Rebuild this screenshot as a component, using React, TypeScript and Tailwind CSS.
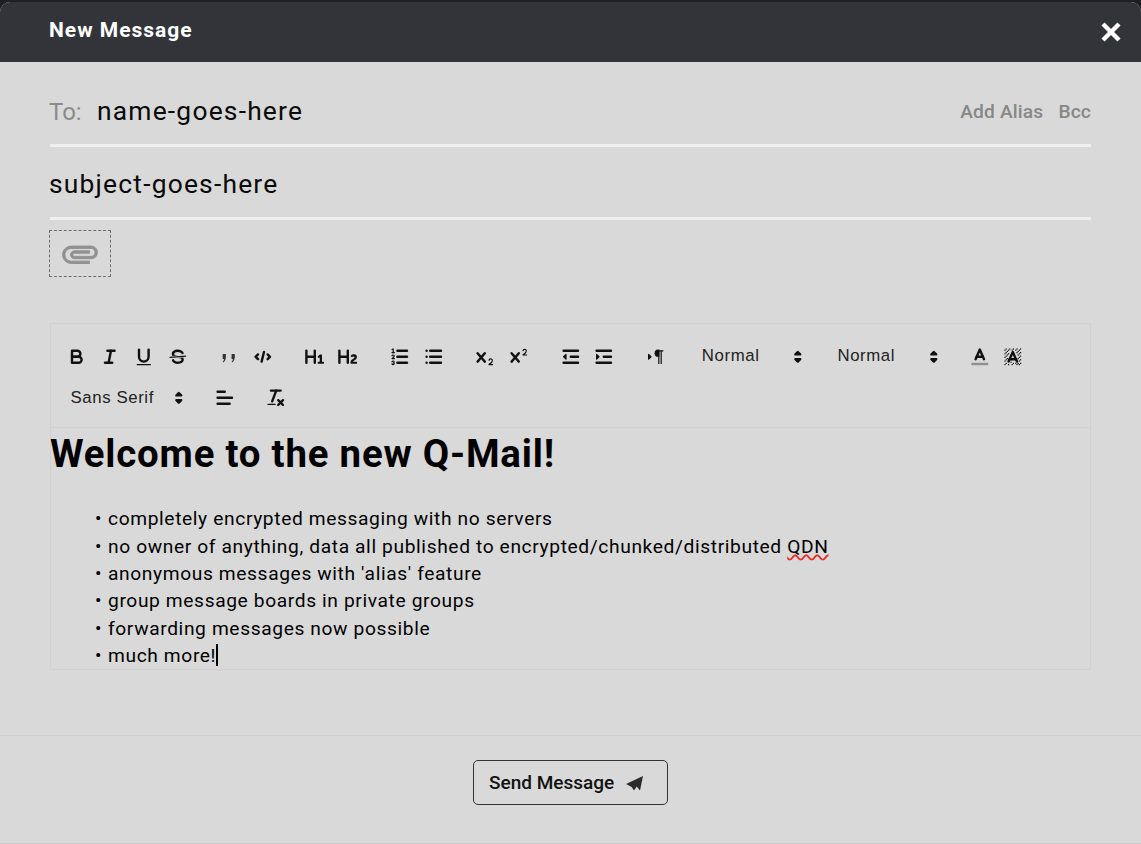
import type { ReactNode } from 'react';

const roboto = { fontFamily: 'Roboto, sans-serif' };

function Icon({ children }: { children: ReactNode }) {
    return (
        <button className="w-[33.7px] h-[29px] flex items-center justify-center shrink-0">
            <svg viewBox="0 0 18 18" className="w-[21.6px] h-[21.6px]" fill="none" stroke="#111" strokeWidth="2" strokeLinecap="round" strokeLinejoin="round">
                {children}
            </svg>
        </button>
    );
}

function Picker({ label, width, labelClass }: { label: string; width: string; labelClass: string }) {
    return (
        <div className={`${width} h-[29px] flex items-center justify-between pl-[11px] pr-[0px] mr-[18px] shrink-0`}>
            <span className={`${labelClass} text-[16.8px] tracking-[0.6px] text-[#222]`} style={{ fontFamily: '"Liberation Sans", sans-serif' }}>{label}</span>
            <svg viewBox="0 0 18 18" className="w-[21.6px] h-[21.6px]" fill="#111" stroke="#111" strokeWidth="2" strokeLinejoin="round">
                <polygon points="7 11 9 13 11 11 7 11" />
                <polygon points="7 7 9 5 11 7 7 7" />
            </svg>
        </div>
    );
}

const hatch: number[][] = [
    [4, 4], [5, 3], [6, 2], [3, 5], [2, 6], [5, 6], [4, 7], [3, 8], [2, 9], [3, 11], [2, 12], [4, 10], [3, 14], [2, 15],
    [9, 2], [12, 2], [15, 2], [8, 3], [11, 3], [14, 3], [2, 3], [3, 2], [13, 4], [12, 5], [15, 5], [14, 6], [13, 7], [15, 8],
    [14, 9], [13, 10], [15, 11], [14, 12], [15, 14], [13, 14], [11, 14], [9, 14], [12, 15], [7, 13], [5, 15], [8, 15], [14, 15],
];

const bullets = [
    'completely encrypted messaging with no servers',
    'no owner of anything, data all published to encrypted/chunked/distributed ',
    "anonymous messages with 'alias' feature",
    'group message boards in private groups',
    'forwarding messages now possible',
    'much more!',
];

export default function App() {
    return (
        <div className="h-[844px] bg-[#1e1f22] pt-[2px] overflow-hidden" style={roboto}>
            <div className="h-[842px] bg-[#d9d9d9] rounded-t-[10px] flex flex-col overflow-hidden">
                {/* Header */}
                <div className="h-[60px] bg-[#33343a] flex items-center justify-between pl-[49px] pr-[20px] shrink-0">
                    <h1 className="text-[21px] font-bold text-white tracking-[1px] -mt-[2px]">New Message</h1>
                    <svg viewBox="0 0 20 20" className="w-[20px] h-[20px]" stroke="#fff" strokeWidth="4.4">
                        <line x1="2" y1="2" x2="18" y2="18" />
                        <line x1="18" y1="2" x2="2" y2="18" />
                    </svg>
                </div>

                <div className="flex-1 pl-[50px] pr-[50px] flex flex-col">
                    {/* To */}
                    <div className="h-[85px] border-b-[3px] border-[#f0f0f0] flex items-center justify-between shrink-0">
                        <div className="flex items-center mt-[18px]">
                            <span className="text-[24px] text-[#8b8b8b] -ml-[1px] w-[48px]">To:</span>
                            <span className="text-[26.4px] text-[#0a0a0a] tracking-[1.2px]">name-goes-here</span>
                        </div>
                        <div className="flex items-center gap-[15px] text-[19.2px] tracking-[0.15px] font-medium text-[#878787] mt-[18px]">
                            <span>Add Alias</span>
                            <span>Bcc</span>
                        </div>
                    </div>

                    {/* Subject */}
                    <div className="h-[73px] pt-[6px] border-b-[3px] border-[#f0f0f0] flex items-center shrink-0">
                        <span className="text-[26.4px] text-[#0a0a0a] tracking-[1.2px] -ml-[1px]">subject-goes-here</span>
                    </div>

                    {/* Attachment */}
                    <div className="w-[62px] h-[47px] mt-[10px] -ml-[1px] border border-dashed border-[#6f6f6f] flex items-center justify-center shrink-0">
                        <svg viewBox="0 0 24 24" className="w-[38px] h-[38px] rotate-90" fill="#919191" stroke="#919191" strokeWidth="0.6">
                            <path d="M16.5 6v11.5c0 2.21-1.79 4-4 4s-4-1.79-4-4V5c0-1.38 1.12-2.5 2.5-2.5s2.5 1.12 2.5 2.5v10.5c0 .55-.45 1-1 1s-1-.45-1-1V6H10v9.5c0 1.38 1.12 2.5 2.5 2.5s2.5-1.12 2.5-2.5V5c0-2.21-1.79-4-4-4S7 2.79 7 5v12.5c0 3.04 2.46 5.5 5.5 5.5s5.5-2.46 5.5-5.5V6h-1.5z" />
                        </svg>
                    </div>

                    {/* Toolbar */}
                    <div className="h-[105px] mt-[46px] border border-[#d0d0d0] pl-[8.5px] pt-[12px] flex flex-col shrink-0">
                        <div className="h-[41px] flex items-center">
                            <div className="flex mr-[18px]">
                                <Icon>
                                    <path d="M5,4H9.5A2.5,2.5,0,0,1,12,6.5v0A2.5,2.5,0,0,1,9.5,9H5V4Z" />
                                    <path d="M5,9h5.5A2.5,2.5,0,0,1,13,11.5v0A2.5,2.5,0,0,1,10.5,14H5V9Z" />
                                </Icon>
                                <Icon>
                                    <line x1="7" x2="13" y1="4" y2="4" />
                                    <line x1="5" x2="11" y1="14" y2="14" />
                                    <line x1="8" x2="10" y1="14" y2="4" />
                                </Icon>
                                <Icon>
                                    <path d="M5,3V9a4,4,0,0,0,4,4H9a4,4,0,0,0,4-4V3" />
                                    <rect height="1" rx=".5" width="12" x="3" y="15" fill="#111" strokeWidth="0" />
                                </Icon>
                                <Icon>
                                    <line x1="15.5" x2="2.5" y1="8.5" y2="9.5" strokeWidth="1" />
                                    <path fill="#111" stroke="none" d="M9.007,8C6.542,7.791,6,7.519,6,6.5,6,5.792,7.283,5,9,5c1.571,0,2.765.679,2.969,1.309a1,1,0,0,0,1.9-.617C13.356,4.106,11.354,3,9,3,6.2,3,4,4.538,4,6.5a3.2,3.2,0,0,0,.5,1.843Z" />
                                    <path fill="#111" stroke="none" d="M8.984,10C11.457,10.208,12,10.479,12,11.5c0,.708-1.283,1.5-3,1.5-1.571,0-2.765-.679-2.969-1.309a1,1,0,1,0-1.9.617C4.644,13.894,6.646,15,9,15c2.8,0,5-1.538,5-3.5a3.2,3.2,0,0,0-.5-1.843Z" />
                                </Icon>
                            </div>
                            <div className="flex mr-[18px]">
                                <Icon>
                                    <path fill="#333" stroke="none" d="M3.9,6.6h2.7v2.6c0,2-.9,3.6-2.2,4.6l-.5-.7c.7-.7,1-1.3,1.1-2.3H3.9Z" />
                                    <path fill="#333" stroke="none" d="M11.3,6.6h2.7v2.6c0,2-.9,3.6-2.2,4.6l-.5-.7c.7-.7,1-1.3,1.1-2.3H11.3Z" />
                                </Icon>
                                <Icon>
                                    <polyline points="5 7 3 9 5 11" />
                                    <polyline points="13 7 15 9 13 11" />
                                    <line x1="10" x2="8" y1="5" y2="13" />
                                </Icon>
                            </div>
                            <div className="flex mr-[18px]">
                                <Icon>
                                    <path fill="#111" stroke="none" d="M10,4V14a1,1,0,0,1-2,0V10H3v4a1,1,0,0,1-2,0V4A1,1,0,0,1,3,4V8H8V4a1,1,0,0,1,2,0Zm6.06787,9.209H14.98975V7.59863a.54085.54085,0,0,0-.605-.60547h-.62744a1.01119,1.01119,0,0,0-.748.29688L11.645,8.56641a.5435.5435,0,0,0-.022.8584l.28613.30762a.53861.53861,0,0,0,.84717.0332l.09912-.08789a1.2137,1.2137,0,0,0,.2417-.35254h.02246s-.01123.30859-.01123.60547V13.209H12.041a.54085.54085,0,0,0-.605.60547v.43945a.54085.54085,0,0,0,.605.60547h4.02686a.54085.54085,0,0,0,.605-.60547v-.43945A.54085.54085,0,0,0,16.06787,13.209Z" />
                                </Icon>
                                <Icon>
                                    <path fill="#111" stroke="none" d="M16.73975,13.81445v.43945a.54085.54085,0,0,1-.605.60547H11.855a.58392.58392,0,0,1-.64893-.60547V14.0127c0-2.90527,3.39941-3.42187,3.39941-4.55469a.77675.77675,0,0,0-.84717-.78125,1.17684,1.17684,0,0,0-.83594.38477c-.2749.26367-.561.374-.85791.13184l-.4292-.34082c-.30811-.24219-.38525-.51758-.1543-.81445a2.97155,2.97155,0,0,1,2.45361-1.17676,2.45393,2.45393,0,0,1,2.68408,2.40918c0,2.45312-3.1792,2.92676-3.27832,3.93848h2.79443A.54085.54085,0,0,1,16.73975,13.81445ZM9,3A.99974.99974,0,0,0,8,4V8H3V4A1,1,0,0,0,1,4V14a1,1,0,0,0,2,0V10H8v4a1,1,0,0,0,2,0V4A.99974.99974,0,0,0,9,3Z" />
                                </Icon>
                            </div>
                            <div className="flex mr-[18px]">
                                <Icon>
                                    <line x1="7" x2="15" y1="4" y2="4" />
                                    <line x1="7" x2="15" y1="9" y2="9" />
                                    <line x1="7" x2="15" y1="14" y2="14" />
                                    <line x1="2.5" x2="4.5" y1="5.5" y2="5.5" strokeWidth="1" />
                                    <path fill="#111" stroke="none" d="M3.5,6A0.5,0.5,0,0,1,3,5.5V3.085l-0.276.138A0.5,0.5,0,0,1,2.053,3c-0.124-.247-0.023-0.324.224-0.447l1-.5A0.5,0.5,0,0,1,4,2.5v3A0.5,0.5,0,0,1,3.5,6Z" />
                                    <path strokeWidth="1" d="M4.5,10.5h-2c0-.234,1.85-1.076,1.85-2.234A0.959,0.959,0,0,0,2.5,8.156" />
                                    <path strokeWidth="1" d="M2.5,14.846a0.959,0.959,0,0,0,1.85-.109A0.7,0.7,0,0,0,3.75,14a0.688,0.688,0,0,0,.6-0.736,0.959,0.959,0,0,0-1.85-.109" />
                                </Icon>
                                <Icon>
                                    <line x1="6" x2="15" y1="4" y2="4" />
                                    <line x1="6" x2="15" y1="9" y2="9" />
                                    <line x1="6" x2="15" y1="14" y2="14" />
                                    <line x1="3" x2="3" y1="4" y2="4" />
                                    <line x1="3" x2="3" y1="9" y2="9" />
                                    <line x1="3" x2="3" y1="14" y2="14" />
                                </Icon>
                            </div>
                            <div className="flex mr-[18px]">
                                <Icon>
                                    <path fill="#111" stroke="none" d="M15.5,15H13.861a3.858,3.858,0,0,0,1.914-2.975,1.8,1.8,0,0,0-1.6-1.751A1.921,1.921,0,0,0,12.021,11.7a0.50013,0.50013,0,1,0,.957.291h0a0.914,0.914,0,0,1,1.053-.725,0.81,0.81,0,0,1,.744.762c0,1.076-1.16971,1.86982-1.93971,2.43082A1.45639,1.45639,0,0,0,12,15.5a0.5,0.5,0,0,0,.5.5h3A0.5,0.5,0,0,0,15.5,15Z" />
                                    <path fill="#111" stroke="none" d="M9.65,5.241a1,1,0,0,0-1.409.108L6,7.964,3.759,5.349A1,1,0,0,0,2.192,6.59178Q2.21541,6.6213,2.241,6.649L4.684,9.5,2.241,12.35A1,1,0,0,0,3.71,13.70722q0.02557-.02768.049-0.05722L6,11.036,8.241,13.65a1,1,0,1,0,1.567-1.24277Q9.78459,12.3777,9.759,12.35L7.316,9.5,9.759,6.651A1,1,0,0,0,9.65,5.241Z" />
                                </Icon>
                                <Icon>
                                    <path fill="#111" stroke="none" d="M15.5,7H13.861a4.015,4.015,0,0,0,1.914-2.975,1.8,1.8,0,0,0-1.6-1.751A1.922,1.922,0,0,0,12.021,3.7a0.5,0.5,0,1,0,.957.291,0.917,0.917,0,0,1,1.053-.725,0.81,0.81,0,0,1,.744.762c0,1.077-1.164,1.925-1.934,2.486A1.423,1.423,0,0,0,12,7.5a0.5,0.5,0,0,0,.5.5h3A0.5,0.5,0,0,0,15.5,7Z" />
                                    <path fill="#111" stroke="none" d="M9.651,5.241a1,1,0,0,0-1.41.108L6,7.964,3.759,5.349a1,1,0,1,0-1.519,1.3L4.683,9.5,2.241,12.35a1,1,0,1,0,1.519,1.3L6,11.036,8.241,13.65a1,1,0,0,0,1.519-1.3L7.317,9.5,9.759,6.651A1,1,0,0,0,9.651,5.241Z" />
                                </Icon>
                            </div>
                            <div className="flex mr-[18px]">
                                <Icon>
                                    <line x1="3" x2="15" y1="14" y2="14" />
                                    <line x1="3" x2="15" y1="4" y2="4" />
                                    <line x1="9" x2="15" y1="9" y2="9" />
                                    <polyline fill="#111" stroke="#111" strokeWidth="1" points="5 7 5 11 3 9 5 7" />
                                </Icon>
                                <Icon>
                                    <line x1="3" x2="15" y1="14" y2="14" />
                                    <line x1="3" x2="15" y1="4" y2="4" />
                                    <line x1="9" x2="15" y1="9" y2="9" />
                                    <polyline fill="#111" stroke="#111" strokeWidth="1" points="3 7 3 11 5 9 3 7" />
                                </Icon>
                            </div>
                            <div className="flex mr-[18px]">
                                <Icon>
                                    <polygon fill="#111" stroke="#111" strokeWidth="1" points="3 11 5 9 3 7 3 11" />
                                    <line x1="15" x2="11" y1="4" y2="4" strokeWidth="1" />
                                    <path fill="#111" stroke="none" d="M11,3a3,3,0,0,0,0,6h1V3H11Z" />
                                    <rect fill="#111" stroke="none" height="11" width="1" x="11" y="4" />
                                    <rect fill="#111" stroke="none" height="11" width="1" x="13" y="4" />
                                </Icon>
                            </div>
                            <Picker label="Normal" width="w-[117.6px]" labelClass="-mt-[2px]" />
                            <Picker label="Normal" width="w-[118.2px]" labelClass="-mt-[2px]" />
                            <div className="flex">
                                <Icon>
                                    <line x1="3" x2="15" y1="15" y2="15" stroke="#8f8f8f" strokeLinecap="square" />
                                    <polyline points="5.5 11 9 3 12.5 11" />
                                    <line x1="11.63" x2="6.38" y1="9" y2="9" />
                                </Icon>
                                <Icon>
                                    {hatch.map(([x, y]) => (
                                        <rect key={`${x}-${y}`} x={x} y={y} width="1" height="1" fill="#111" stroke="none" />
                                    ))}
                                    <polyline points="5.5 13 9 5 12.5 13" />
                                    <line x1="11.63" x2="6.38" y1="11" y2="11" />
                                </Icon>
                            </div>
                        </div>
                        <div className="h-[42px] flex items-center">
                            <Picker label="Sans Serif" width="w-[130px]" labelClass="mt-0" />
                            <div className="flex mr-[18px]">
                                <Icon>
                                    <line x1="3" x2="15" y1="9" y2="9" />
                                    <line x1="3" x2="13" y1="14" y2="14" />
                                    <line x1="3" x2="9" y1="4" y2="4" />
                                </Icon>
                            </div>
                            <div className="flex">
                                <Icon>
                                    <line x1="5" x2="13" y1="3" y2="3" />
                                    <line x1="6" x2="9.35" y1="12" y2="3" />
                                    <line x1="11" x2="15" y1="11" y2="15" />
                                    <line x1="15" x2="11" y1="11" y2="15" />
                                    <rect fill="#111" stroke="none" height="1" rx=".5" width="7" x="2" y="14" />
                                </Icon>
                            </div>
                        </div>
                    </div>

                    {/* Editor */}
                    <div className="h-[243px] border-x border-b border-[#d0d0d0] -mt-px shrink-0 text-black">
                        <h2 className="text-[38.4px] font-bold leading-[52px] tracking-[0.8px] mt-[1px] -ml-[1px]">Welcome to the new Q-Mail!</h2>
                        <ul className="mt-[25.2px] pl-[44px] text-[19.2px] leading-[27.35px] tracking-[0.62px]">
                            {bullets.map((text, i) => (
                                <li key={text} className="flex">
                                    <span className="w-[13px] text-left shrink-0">•</span>
                                    <span className="whitespace-pre">
                                        {text}
                                        {i === 1 && <span className="underline decoration-wavy decoration-[#e8302a] decoration-[1.5px] [text-decoration-skip-ink:none]">QDN</span>}
                                    </span>
                                    {i === 5 && <span className="w-[2px] h-[22px] bg-black mt-[2px]" />}
                                </li>
                            ))}
                        </ul>
                    </div>
                </div>

                {/* Footer */}
                <div className="h-[109px] border-t border-b border-t-[#cdcdcd] border-b-[#c8c8c8] flex justify-center pt-[24px] shrink-0">
                    <button className="w-[195px] h-[45px] pt-[1px] border border-[#333] rounded-[5px] flex items-center pl-[15px] gap-[12px] text-[19px] font-medium text-[#111]">
                        Send Message
                        <svg viewBox="0 0 17 15" className="w-[17px] h-[15px]" fill="#2b2b2b">
                            <path d="M17 0 L0 8 L5.7 11 L8 14.5 L10.7 10.5 L14 14.5 Z" />
                        </svg>
                    </button>
                </div>
            </div>
        </div>
    );
}
